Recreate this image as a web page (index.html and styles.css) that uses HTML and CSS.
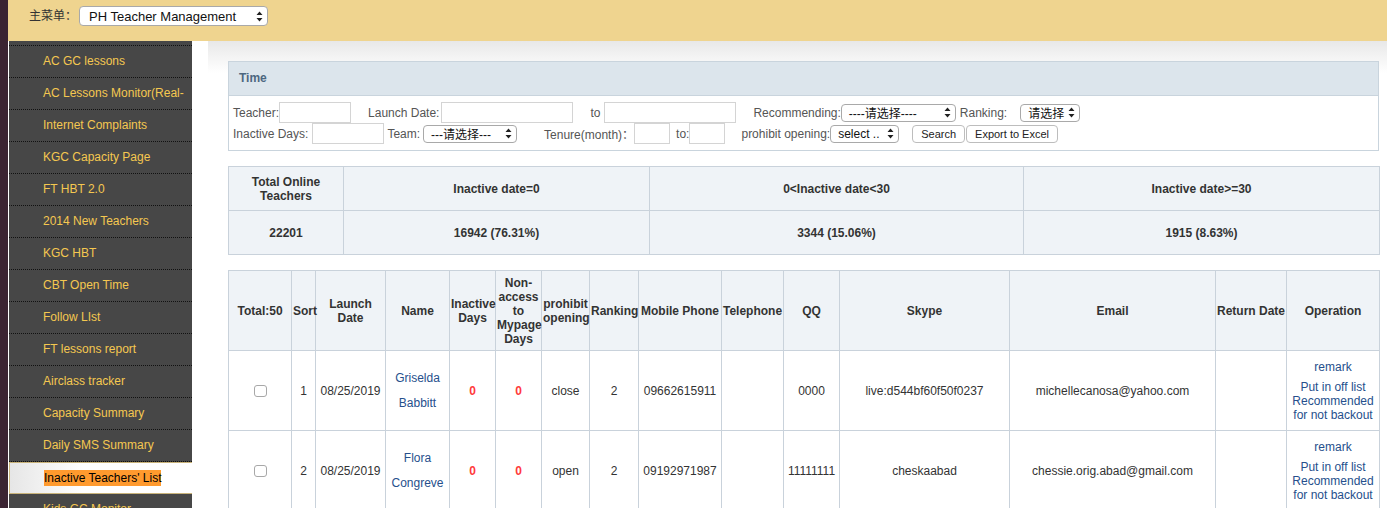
FILE: index.html
```html
<!DOCTYPE html>
<html>
<head>
<meta charset="utf-8">
<link rel="stylesheet" href="styles.css">
</head>
<body>
<div class="page">
  <div class="strip"></div>
  <div class="main">
    <header class="topbar">
      <span class="menu-label">主菜单：</span>
      <div class="sel sel-menu"><span>PH Teacher Management</span><svg class="arr" width="7" height="11" viewBox="0 0 7 11"><path d="M3.5 0.5 L6.5 4 L0.5 4 Z M3.5 10.5 L6.5 7 L0.5 7 Z" fill="#222"/></svg></div>
    </header>
    <div class="body">
      <nav class="sidebar">
        <ul>
          <li>AC GC lessons</li>
          <li>AC Lessons Monitor(Real-</li>
          <li>Internet Complaints</li>
          <li>KGC Capacity Page</li>
          <li>FT HBT 2.0</li>
          <li>2014 New Teachers</li>
          <li>KGC HBT</li>
          <li>CBT Open Time</li>
          <li>Follow LIst</li>
          <li>FT lessons report</li>
          <li>Airclass tracker</li>
          <li>Capacity Summary</li>
          <li>Daily SMS Summary</li>
          <li class="active"><span class="hl">Inactive Teachers' List</span></li>
          <li>Kids GC Monitor</li>
        </ul>
      </nav>
      <main class="content">
        <section class="panel">
          <div class="panel-head">Time</div>
          <div class="panel-body">
            <div class="frow">
              <span class="lbl">Teacher:</span><span class="inp w72"></span>
              <span class="lbl ml17">Launch Date:</span><span class="inp w132 ml2"></span>
              <span class="lbl ml17">to</span><span class="inp w132 ml4"></span>
              <span class="lbl ml17">Recommending:</span><div class="sel w115"><span>----请选择----</span><svg class="arr" width="7" height="11" viewBox="0 0 7 11"><path d="M3.5 0.5 L6.5 4 L0.5 4 Z M3.5 10.5 L6.5 7 L0.5 7 Z" fill="#222"/></svg></div>
              <span class="lbl ml4">Ranking:</span><div class="sel w60 ml13"><span>请选择</span><svg class="arr" width="7" height="11" viewBox="0 0 7 11"><path d="M3.5 0.5 L6.5 4 L0.5 4 Z M3.5 10.5 L6.5 7 L0.5 7 Z" fill="#222"/></svg></div>
            </div>
            <div class="frow">
              <span class="lbl">Inactive Days:</span><span class="inp w72 ml4"></span>
              <span class="lbl ml3">Team:</span><div class="sel w94 ml3"><span>---请选择---</span><svg class="arr" width="7" height="11" viewBox="0 0 7 11"><path d="M3.5 0.5 L6.5 4 L0.5 4 Z M3.5 10.5 L6.5 7 L0.5 7 Z" fill="#222"/></svg></div>
              <span class="lbl ml27">Tenure(month)：</span><span class="inp w36"></span>
              <span class="lbl ml6">to:</span><span class="inp w36"></span>
              <span class="lbl ml16">prohibit opening:</span><div class="sel w69"><span>select ..</span><svg class="arr" width="7" height="11" viewBox="0 0 7 11"><path d="M3.5 0.5 L6.5 4 L0.5 4 Z M3.5 10.5 L6.5 7 L0.5 7 Z" fill="#222"/></svg></div>
              <span class="btn ml13">Search</span><span class="btn ml1">Export to Excel</span>
            </div>
          </div>
        </section>

        <table class="grid summary">
          <colgroup><col class="c115"><col class="c306"><col class="c374"><col class="c356"></colgroup>
          <tr class="head"><th>Total Online<br>Teachers</th><th>Inactive date=0</th><th>0&lt;Inactive date&lt;30</th><th>Inactive date&gt;=30</th></tr>
          <tr class="srow"><th>22201</th><th>16942 (76.31%)</th><th>3344 (15.06%)</th><th>1915 (8.63%)</th></tr>
        </table>

        <table class="grid list">
          <colgroup>
            <col class="k63"><col class="k24"><col class="k70"><col class="k64"><col class="k46"><col class="k46"><col class="k48"><col class="k49"><col class="k83"><col class="k62"><col class="k56"><col class="k170"><col class="k206"><col class="k71"><col class="k93">
          </colgroup>
          <tr class="head lhead">
            <th>Total:50</th><th>Sort</th><th>Launch<br>Date</th><th>Name</th><th>Inactive<br>Days</th><th>Non-<br>access<br>to<br>Mypage<br>Days</th><th>prohibit<br>opening</th><th>Ranking</th><th>Mobile Phone</th><th>Telephone</th><th>QQ</th><th>Skype</th><th>Email</th><th>Return Date</th><th>Operation</th>
          </tr>
          <tr class="drow">
            <td><span class="cb"></span></td><td>1</td><td>08/25/2019</td><td class="name">Griselda<br>Babbitt</td><td class="red">0</td><td class="red">0</td><td>close</td><td>2</td><td>09662615911</td><td></td><td>0000</td><td>live:d544bf60f50f0237</td><td>michellecanosa@yahoo.com</td><td></td>
            <td class="ops"><div class="remark">remark</div><div>Put in off list</div><div>Recommended for not backout</div></td>
          </tr>
          <tr class="drow">
            <td><span class="cb"></span></td><td>2</td><td>08/25/2019</td><td class="name">Flora<br>Congreve</td><td class="red">0</td><td class="red">0</td><td>open</td><td>2</td><td>09192971987</td><td></td><td>11111111</td><td>cheskaabad</td><td>chessie.orig.abad@gmail.com</td><td></td>
            <td class="ops"><div class="remark">remark</div><div>Put in off list</div><div>Recommended for not backout</div></td>
          </tr>
        </table>
      </main>
    </div>
  </div>
</div>
</body>
</html>
```
FILE: styles.css
```css
* { box-sizing: border-box; }
html, body { margin: 0; padding: 0; }
body {
  width: 1387px;
  height: 508px;
  overflow: hidden;
  font-family: "Liberation Sans", Arial, "Noto Sans CJK SC", sans-serif;
  font-size: 12px;
  color: #333;
  background: #fff;
}
.page { display: flex; height: 508px; }
.strip { width: 8px; flex: none; background: #3b2432; }
.main { flex: 1; display: flex; flex-direction: column; min-width: 0; }

.topbar {
  height: 41px;
  flex: none;
  background: #efd48f;
  display: flex;
  align-items: flex-start;
  padding: 6px 0 0 21px;
}
.menu-label { color: #333; font-size: 12px; width: 50px; line-height: 20px; }
.sel {
  display: inline-flex;
  align-items: center;
  justify-content: space-between;
  height: 18px;
  border: 1px solid #a9a9a9;
  border-radius: 4px;
  background: #fff;
  padding: 0 4px 0 7px;
  font-size: 12px;
  color: #111;
  white-space: nowrap;
  overflow: hidden;
}
.sel-menu { width: 189px; height: 20px; padding-left: 9px; font-size: 13px; }
.arr { flex: none; margin-left: 3px; }

.body { flex: 1; display: flex; min-height: 0; }
.sidebar {
  width: 184px;
  flex: none;
  background: #474747;
  border-left: 1px solid #fff;
  padding-top: 4px;
  overflow: hidden;
}
.sidebar ul { list-style: none; margin: 0; padding: 0; border-top: 1px dotted #111; }
.sidebar li {
  height: 32px;
  line-height: 31px;
  padding-left: 34px;
  border-bottom: 1px dotted #111;
  color: #f5c850;
  font-size: 12px;
  white-space: nowrap;
  overflow: hidden;
}
.sidebar li.active {
  background: linear-gradient(to right, #e6e6e6, #fff 40%);
  border: 1px solid #c9b37a;
  border-right: none;
  line-height: 30px;
  padding-left: 34px;
}
.hl { background: #ff9a2e; color: #000; padding: 1px 0; }

.content {
  flex: 1;
  margin-left: 16px;
  padding: 20px 8px 0 20px;
  background: linear-gradient(to bottom, #e8e8e8 0px, #fff 32px);
  min-width: 0;
}
.panel { border: 1px solid #c9d4dd; background: #fff; }
.panel-head {
  height: 34px;
  line-height: 33px;
  background: #dce5ec;
  border-bottom: 1px solid #c9d4dd;
  padding-left: 10px;
  font-weight: bold;
  color: #4d6780;
}
.panel-body { padding: 6px 4px 6px; }
.frow { display: flex; align-items: center; height: 21px; color: #555; }
.lbl { white-space: nowrap; }
.inp { display: inline-block; height: 21px; border: 1px solid #d4d4d4; background: #fff; }
.w72 { width: 72px; }
.w132 { width: 132px; }
.w36 { width: 36px; }
.w115 { width: 115px; }
.w60 { width: 60px; }
.w94 { width: 94px; }
.w69 { width: 69px; }
.ml1 { margin-left: 1px; }
.ml2 { margin-left: 2px; }
.ml3 { margin-left: 3px; }
.ml4 { margin-left: 4px; }
.ml6 { margin-left: 6px; }
.ml13 { margin-left: 13px; }
.ml16 { margin-left: 16px; }
.ml17 { margin-left: 17px; }
.ml27 { margin-left: 27px; }
.btn {
  display: inline-block;
  height: 18px;
  line-height: 16px;
  border: 1px solid #bdbdbd;
  border-radius: 4px;
  background: #fff;
  padding: 0 8px;
  font-size: 11px;
  color: #222;
  white-space: nowrap;
}

.grid {
  width: 100%;
  border-collapse: collapse;
  table-layout: fixed;
  margin-top: 15px;
}
.grid th, .grid td {
  border: 1px solid #c9d2db;
  text-align: center;
  vertical-align: middle;
  padding: 0 1px;
}
.grid .head th { background: #eff3f7; font-weight: bold; color: #333; line-height: 14px; }
.summary .head th { height: 44px; }
.summary .srow th { height: 44px; background: #eff3f7; font-weight: bold; }
.c115 { width: 115px; } .c306 { width: 306px; } .c374 { width: 374px; } .c356 { width: 356px; }

.k63{width:63px}.k24{width:24px}.k70{width:70px}.k64{width:64px}.k46{width:46px}.k48{width:48px}.k49{width:49px}.k83{width:83px}.k62{width:62px}.k56{width:56px}.k170{width:170px}.k206{width:206px}.k71{width:71px}.k93{width:93px}

.lhead th { height: 80px; white-space: nowrap; }
.drow td { height: 80px; background: #fff; color: #333; }
.drow td.name { color: #264f8c; line-height: 25px; }
.drow td.red { color: #ff3b3b; font-weight: bold; }
.cb {
  display: inline-block;
  width: 13px;
  height: 12px;
  border: 1px solid #a8a8a8;
  border-radius: 3px;
  background: #fff;
  vertical-align: middle;
}
.drow td.ops { color: #264f8c; line-height: 14px; }
.ops .remark { margin-bottom: 6px; }
```
